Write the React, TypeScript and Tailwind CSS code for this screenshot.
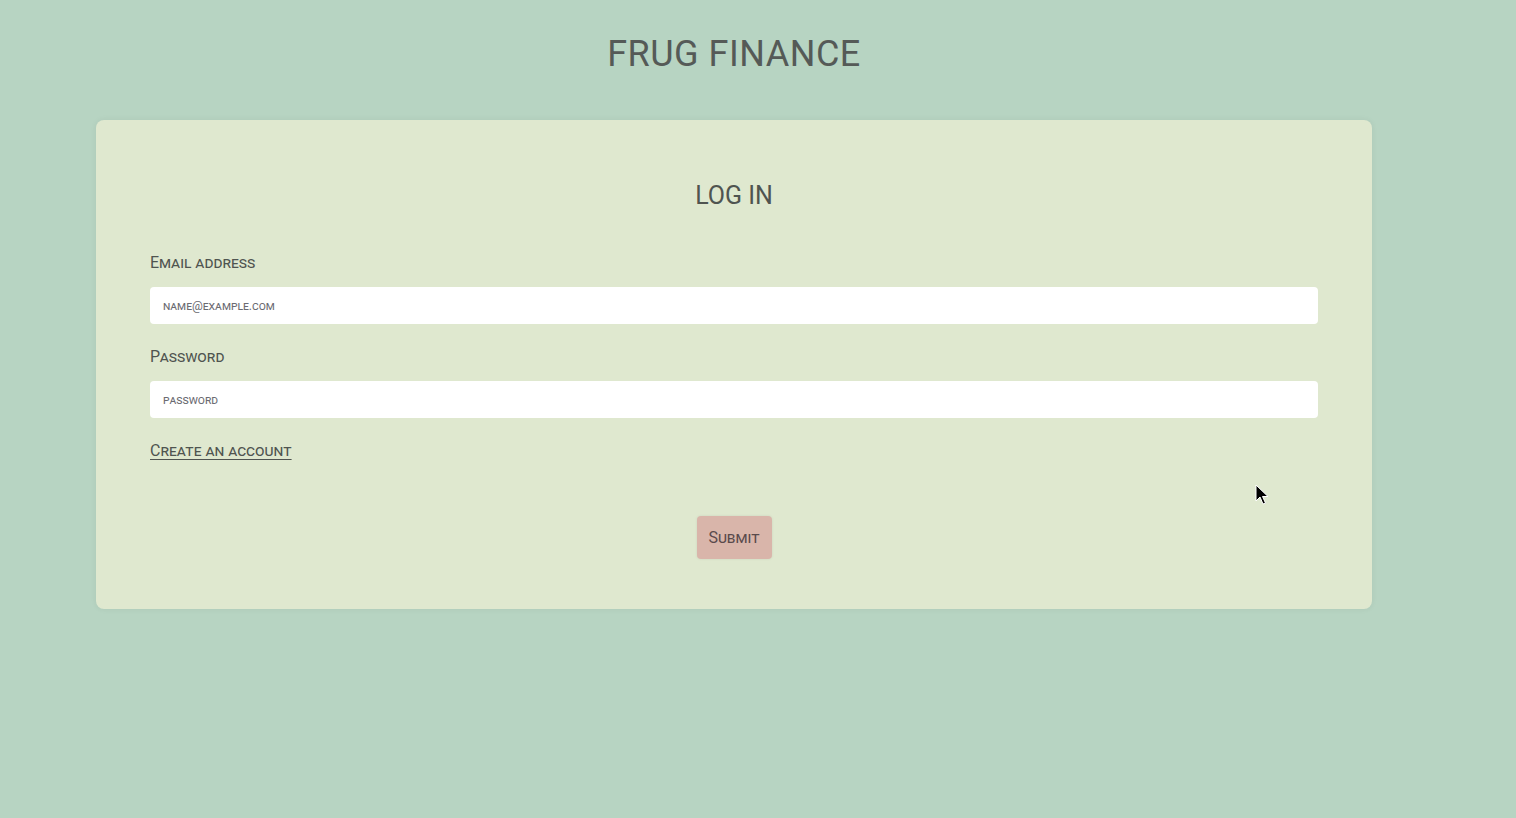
import React from 'react'

const font = { fontFamily: 'Roboto, "Noto Sans", sans-serif' }

export default function App() {
  return (
    <div className="min-h-[818px] w-full bg-[#b7d4c2] relative" style={font}>
      <div className="w-[1468px]">
        <h1 className="pt-[30px] text-center text-[36px] leading-[48px] tracking-[0.5px] text-[#555a57]">
          FRUG FINANCE
        </h1>

        <form
          className="mx-[96px] mt-[42px] rounded-[8px] bg-[#dfe8cf] px-[54px] pt-[56px] pb-[50px] shadow-[0_0_6px_rgba(0,0,0,0.06)]"
          onSubmit={(e) => e.preventDefault()}
        >
          <h2 className="text-center text-[25px] leading-[40px] text-[#4f5450]">LOG IN</h2>

          <label className="mt-[35px] block text-[16px] leading-[24px] text-[#4f5450] [font-variant-caps:small-caps]">
            Email address
          </label>
          <input
            type="email"
            placeholder="name@example.com"
            className="mt-[12px] block h-[37px] w-full rounded-[4px] bg-white px-[13px] text-[12px] text-[#555] outline-none [font-variant-caps:small-caps] placeholder:text-[#6b6b72]"
          />

          <label className="mt-[21px] block text-[16px] leading-[24px] text-[#4f5450] [font-variant-caps:small-caps]">
            Password
          </label>
          <input
            type="password"
            placeholder="password"
            className="mt-[12px] block h-[37px] w-full rounded-[4px] bg-white px-[13px] text-[12px] text-[#555] outline-none [font-variant-caps:small-caps] placeholder:text-[#6b6b72]"
          />

          <a
            href="#"
            className="mt-[21px] inline-block text-[16px] leading-[24px] text-[#4f5450] underline underline-offset-[3px] [font-variant-caps:small-caps]"
          >
            Create an account
          </a>

          <div className="mt-[53px] flex justify-center">
            <button
              type="submit"
              className="h-[43px] w-[75px] rounded-[4px] bg-[#d9b5aa] text-[16px] text-[#5a4a4c] [font-variant-caps:small-caps] shadow-[0_0_3px_rgba(0,0,0,0.08)]"
            >
              Submit
            </button>
          </div>
        </form>
      </div>

      {/* mouse pointer captured in screenshot */}
      <svg className="absolute left-[1255px] top-[484px]" width="14" height="22" viewBox="0 0 14 22">
        <path d="M1 1 L1 17 L5 13 L8 20 L10.5 19 L7.5 12.5 L13 12.5 Z" fill="#000" stroke="#fff" strokeWidth="1" />
      </svg>
    </div>
  )
}
